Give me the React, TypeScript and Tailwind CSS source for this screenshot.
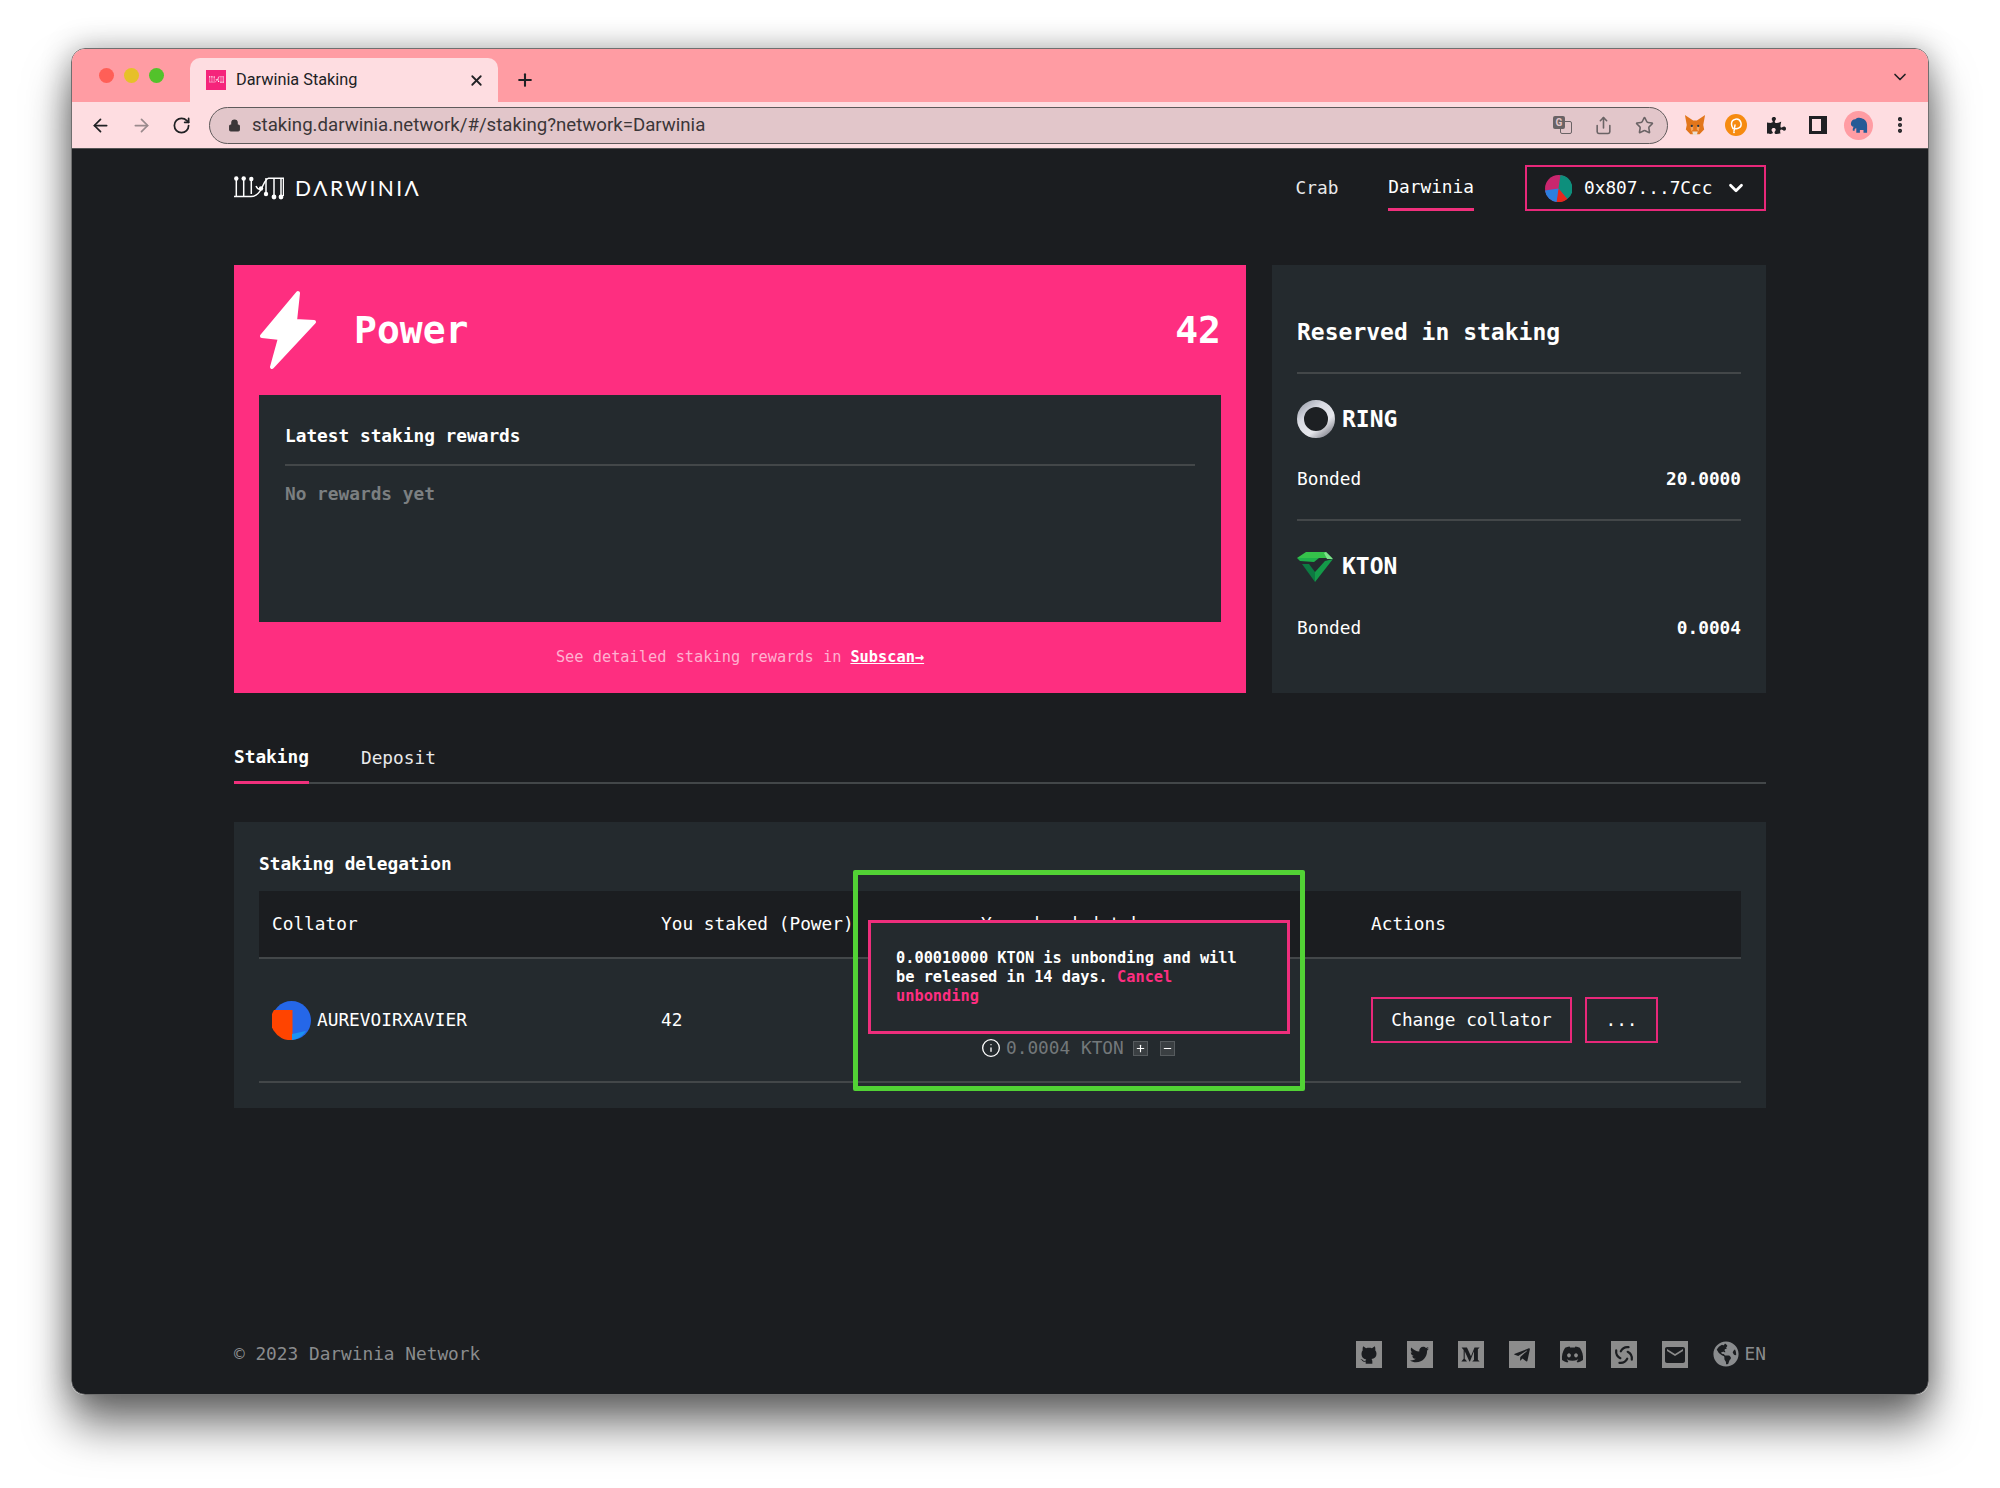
import { ArrowLeft, ArrowRight, ChevronDown, Info, Lock, Minus, MoreVertical, Plus, RotateCw, Share, Star, X } from "lucide-react";
import { FaDiscord, FaGlobeAmericas, FaMediumM, FaPuzzlePiece, FaTelegramPlane, FaTwitter } from "react-icons/fa";
import { MdEmail } from "react-icons/md";

const LogoMark = ({ className }: { className?: string }) => (
  <svg viewBox="0 0 50 24" className={className} fill="none" stroke="currentColor" strokeWidth="1.5">
    <path d="M2.300 3v17M9.700 3v17M17.300 3v15" />
    <path d="M0 20.500h17c5 0 8-3 10.500-8s4-9.800 7-10.300H50" />
    <path d="M32 2v16M40 2v19M47 2v19M49.500 2v18" />
    <path d="M22 10c1 2.500 3 3.500 5 3" />
    <circle cx="2.300" cy="2.500" r="2.200" fill="currentColor" stroke="none" />
    <circle cx="9.700" cy="2.500" r="2.200" fill="currentColor" stroke="none" />
    <circle cx="17.300" cy="3" r="2.200" fill="currentColor" stroke="none" />
    <circle cx="27" cy="12.500" r="2.200" fill="currentColor" stroke="none" />
    <circle cx="32" cy="18" r="2.200" fill="currentColor" stroke="none" />
    <circle cx="40" cy="21" r="2.400" fill="currentColor" stroke="none" />
    <circle cx="47" cy="21" r="2.400" fill="currentColor" stroke="none" />
  </svg>
);

const RingIcon = () => (
  <svg viewBox="0 0 38 38" className="w-[38px] h-[38px]">
    <defs>
      <linearGradient id="ringGrad" x1="0.1" y1="0" x2="0.9" y2="1">
        <stop offset="0" stopColor="#a9adb8" />
        <stop offset="0.3" stopColor="#d9dbe3" />
        <stop offset="0.7" stopColor="#e6e7ec" />
        <stop offset="1" stopColor="#8f9099" />
      </linearGradient>
    </defs>
    <circle cx="19" cy="19" r="15.500" fill="#1d2023" stroke="url(#ringGrad)" strokeWidth="7" />
  </svg>
);

const KtonIcon = () => (
  <svg viewBox="0 0 36 30" className="w-[36px] h-[30px]">
    <polygon points="9,0 29,0 35,6 0,6" fill="#35c24a" />
    <polygon points="29,0 36,7 30,7 27,1" fill="#7fe08a" />
    <polygon points="0,6 22,6 17,10 3,9" fill="#1fb04a" />
    <polygon points="5,12 12,12 18,20 18,30" fill="#0d7a42" />
    <polygon points="36,7 18,30 18,20 28,9" fill="#149a49" />
  </svg>
);

const FoxIcon = () => (
  <svg viewBox="0 0 24 24" className="w-[22px] h-[22px]">
    <polygon points="1,1 10,7 14,7 23,1 21,12 22,17 17,22 7,22 2,17 3,12" fill="#e2761b" />
    <polygon points="7,14 10,13 10,17 8,19" fill="#f6a35d" />
    <polygon points="17,14 14,13 14,17 16,19" fill="#f6a35d" />
    <polygon points="9,19 15,19 14,23 10,23" fill="#eadfd3" />
    <circle cx="8.500" cy="13" r="1.200" fill="#233447" />
    <circle cx="15.500" cy="13" r="1.200" fill="#233447" />
  </svg>
);

const PolkadotIcon = () => (
  <svg viewBox="0 0 22 22" className="w-[22px] h-[22px]">
    <circle cx="11" cy="11" r="11" fill="#f68b10" />
    <path d="M8 14.500c-1-1.500-1.500-3-1.500-4.500a4.800 4.800 0 1 1 7 4.200c-1 .5-2 .6-3 .5M9 17l1-6" fill="none" stroke="#fff" strokeWidth="1.500" strokeLinecap="round" />
    <circle cx="9" cy="18.300" r="0.900" fill="#fff" />
  </svg>
);

const ElephantAvatar = () => (
  <span className="w-[29px] h-[29px] rounded-full bg-[#ff9ca3] flex items-center justify-center">
    <svg viewBox="0 0 20 18" className="w-[18px] h-[17px]">
      <path d="M1 7c0-3 2-5 5-5 2-2 5-2 7-1 3 1 6 3 6 8v8h-4v-3h-4v3H7v-5c-2 0-2 2-2 3l-2-.500c0-2 .500-3 1-4C2 10 1 9 1 7Z" fill="#255a96" />
    </svg>
  </span>
);

const TranslateIcon = () => (
  <span className="relative w-[19px] h-[18px] block">
    <span className="absolute right-0 bottom-0 w-[12px] h-[13px] rounded-[2px] border border-[#6a6365] bg-[#e2c6ca]" />
    <span className="absolute left-0 top-0 w-[12px] h-[13px] rounded-[2px] bg-[#6a6365] text-[#e2c6ca] text-[10px] font-bold leading-[13px] text-center">G</span>
  </span>
);

const GithubIcon = () => (
  <svg viewBox="0 0 24 24" className="w-[20px] h-[21px]" fill="#1b1d20">
    <path d="M5 2l3.500 2.500c2.300-.7 4.700-.7 7 0L19 2c.6 1.500.8 3.500.5 5 1 1.200 1.500 2.500 1.500 4 0 4-2.500 6-6 6.500.6.600 1 1.500 1 2.500v3H8v-2.500c-2 .6-3.500.2-4.500-1.500-.4-.7-1-1.300-2-1.500 1.200-.3 2.300.2 3 1.200.8 1 2 1.200 3.500.8 0-.6.300-1.200.8-1.500C6 17.500 3 15.500 3 11c0-1.500.500-2.800 1.500-4C4.200 5.500 4.400 3.500 5 2z" />
  </svg>
);

const ElementIcon = () => (
  <svg viewBox="0 0 24 24" className="w-[22px] h-[22px]" fill="none" stroke="#1b1d20" strokeWidth="2.400" strokeLinecap="round">
    {[0, 90, 180, 270].map((deg) => (
      <path key={deg} d="M8.500 8c1.500-3 4.500-5 8.500-4.500" transform={`rotate(${deg} 12 12)`} />
    ))}
  </svg>
);

const AccountAvatar = () => (
  <svg viewBox="0 0 28 28" className="w-[27px] h-[27px]">
    <circle cx="14" cy="14" r="14" fill="#c9266e" />
    <path d="M14 14 L16 0 A14 14 0 0 1 23 25 Z" fill="#0d8f7c" />
    <path d="M14 14 L23 25 A14 14 0 0 1 12 28 Z" fill="#e5281c" />
    <path d="M14 14 L12 28 A14 14 0 0 1 0 16 Z" fill="#2b7fe0" />
  </svg>
);

const CollatorAvatar = () => (
  <svg viewBox="0 0 39 39" className="w-[39px] h-[39px]">
    <circle cx="19.500" cy="19.500" r="19.500" fill="#2567e8" />
    <path d="M2 9h18.500v30A19.500 19.500 0 0 1 2 9Z" fill="#ff4400" />
    <path d="M20 39V33l14-3A19.500 19.500 0 0 1 20 39Z" fill="#1c93f2" />
  </svg>
);

const Divider = () => <div className="h-[2px] bg-[#434749]" />;

const footerIcons = [
  <GithubIcon key="github" />,
  <FaTwitter key="twitter" className="text-[19px]" />,
  <FaMediumM key="medium" className="text-[19px]" />,
  <FaTelegramPlane key="telegram" className="text-[18px]" />,
  <FaDiscord key="discord" className="text-[23px]" />,
  <ElementIcon key="element" />,
  <MdEmail key="mail" className="text-[24px]" />,
];

export default function App() {
  return (
    <div className="w-[2000px] h-[1488px] bg-white pt-[48px] pl-[71px] overflow-hidden">
      <div className="w-[1858px] h-[1347px] rounded-[14px] border border-[#6f6f6f] overflow-hidden flex flex-col shadow-[0_30px_45px_rgba(0,0,0,0.55),0_0_30px_rgba(0,0,0,0.3)] font-['Roboto',sans-serif]">
        {/* browser tab strip */}
        <div className="h-[53px] shrink-0 bg-[#ff9ca3] flex items-end">
          <div className="w-[118px] h-full flex items-center gap-[10px] pl-[27px] pb-[1px] shrink-0">
            <span className="w-[15px] h-[15px] rounded-full bg-[#ff5f57]" />
            <span className="w-[15px] h-[15px] rounded-full bg-[#e6c029]" />
            <span className="w-[15px] h-[15px] rounded-full bg-[#53c22b]" />
          </div>
          <div className="w-[308px] h-[44px] bg-[#fedde1] rounded-t-[10px] flex items-center pl-[16px] pr-[13px] text-[#202124] text-[16.300px]">
            <span className="w-[20px] h-[20px] bg-[#f5247b] flex items-center justify-center text-white">
              <LogoMark className="w-[15px]" />
            </span>
            <span className="ml-[10px] flex-1 pt-[1px]">Darwinia Staking</span>
            <X size={17} strokeWidth={2.5} />
          </div>
          <div className="h-[44px] flex items-center pl-[17px] text-[#202124]">
            <Plus size={20} strokeWidth={2.5} />
          </div>
          <div className="flex-1 h-full flex items-center justify-end pr-[18px] pt-[2px] text-[#202124]">
            <ChevronDown size={20} strokeWidth={2} />
          </div>
        </div>

        {/* browser toolbar */}
        <div className="h-[47px] shrink-0 bg-[#fedde1] flex items-center border-b border-[#555]">
          <div className="w-[137px] flex items-center gap-[20px] pl-[18px] shrink-0 text-[#202124]">
            <ArrowLeft size={21} />
            <ArrowRight size={21} className="text-[#9a8a8d]" />
            <RotateCw size={19} strokeWidth={2.2} />
          </div>
          <div className="w-[1459px] h-[37px] rounded-full bg-[#e2c6ca] border border-[#5f5a5b] flex items-center pl-[18px] pr-[13px] text-[#3b3638] text-[18.650px]">
            <Lock size={13} fill="#3b3638" className="mr-[11px]" />
            <span className="flex-1 pt-[1px]">staking.darwinia.network/#/staking?network=Darwinia</span>
            <div className="flex items-center gap-[22px] text-[#6a6365]">
              <TranslateIcon />
              <Share size={19} />
              <Star size={19} />
            </div>
          </div>
          <div className="flex-1 flex items-center pl-[6px] text-[#202124]">
            <span className="w-[41px] flex justify-center"><FoxIcon /></span>
            <span className="w-[41px] flex justify-center"><PolkadotIcon /></span>
            <span className="w-[41px] flex justify-center"><FaPuzzlePiece className="text-[19px]" /></span>
            <span className="w-[41px] flex justify-center">
              <span className="w-[18px] h-[18px] border-[3px] border-r-[6px] border-[#202124] bg-[#fedde1]" />
            </span>
            <span className="w-[41px] flex justify-center"><ElephantAvatar /></span>
            <span className="w-[41px] flex justify-center"><MoreVertical size={20} strokeWidth={3} /></span>
          </div>
        </div>

        {/* page */}
        <div className="flex-1 bg-[#1b1d20] px-[162px] flex flex-col text-white text-[17.800px] font-['DejaVu_Sans_Mono',monospace]">
          <header className="h-[78px] shrink-0 flex items-center justify-between">
            <div className="flex items-center gap-[11px]">
              <LogoMark className="w-[50px] h-[24px] text-white" />
              <span className="font-['Lato',sans-serif] text-[21px] tracking-[2.400px]">DΛRWINIΛ</span>
            </div>
            <div className="flex items-center">
              <span className="h-[45px] flex items-center mr-[50px] text-[#e9e9ea]">Crab</span>
              <span className="h-[45px] flex items-center mr-[51px] border-b-[3px] border-[#f0307c] pt-[1px]">Darwinia</span>
              <button className="w-[241px] h-[46px] border-2 border-[#e8287a] flex items-center pl-[18px]">
                <AccountAvatar />
                <span className="ml-[12px]">0x807...7Ccc</span>
                <ChevronDown size={22} strokeWidth={3} className="ml-[13px]" />
              </button>
            </div>
          </header>

          <div className="mt-[38px] flex gap-[26px] h-[428px] shrink-0">
            {/* power card */}
            <div className="w-[1012px] bg-[#fe2e80] px-[25px] flex flex-col">
              <div className="h-[130px] shrink-0 flex items-center justify-between">
                <div className="flex items-center">
                  <svg viewBox="0 0 57 80" className="w-[57px] h-[80px]" fill="#fff" stroke="#fff" strokeWidth="4" strokeLinejoin="round">
                    <polygon points="39,3 36,31 55,32 13,77 21,48 3,46" />
                  </svg>
                  <span className="ml-[38px] text-[38px] font-semibold">Power</span>
                </div>
                <span className="text-[38px] font-semibold">42</span>
              </div>
              <div className="h-[227px] shrink-0 bg-[#242a2e] px-[26px]">
                <div className="h-[69px] flex items-center pt-[13px] font-bold">Latest staking rewards</div>
                <Divider />
                <div className="pt-[15px] font-bold text-[#7b7f81]">No rewards yet</div>
              </div>
              <div className="flex-1 flex items-center justify-center text-[15.300px] text-[#ffb1d0]">
                <span>See detailed staking rewards in </span>
                <span className="ml-[9px] text-white font-bold underline">Subscan→</span>
              </div>
            </div>

            {/* reserved card */}
            <div className="flex-1 bg-[#242a2e] px-[25px]">
              <div className="h-[107px] flex items-center pt-[28px] text-[23px] font-bold">Reserved in staking</div>
              <Divider />
              <div className="h-[90px] flex items-center gap-[7px] text-[23px] font-semibold">
                <RingIcon />
                RING
              </div>
              <div className="h-[30px] flex items-center justify-between">
                <span>Bonded</span>
                <span className="font-semibold">20.0000</span>
              </div>
              <div className="h-[25px]" />
              <Divider />
              <div className="h-[91px] flex items-center gap-[9px] text-[23px] font-semibold">
                <KtonIcon />
                KTON
              </div>
              <div className="h-[32px] flex items-center justify-between">
                <span>Bonded</span>
                <span className="font-semibold">0.0004</span>
              </div>
            </div>
          </div>

          {/* tabs */}
          <div className="mt-[43px] h-[48px] shrink-0 flex gap-[52px] border-b-2 border-[#434749]">
            <div className="h-[48px] flex items-center border-b-[3px] border-[#f0307c] font-bold pb-[2px]">Staking</div>
            <div className="h-[46px] flex items-center text-[#e9e9ea] pb-[2px]">Deposit</div>
          </div>

          {/* delegation table */}
          <div className="relative mt-[38px] h-[286px] shrink-0 bg-[#242a2e] px-[25px]">
            <div className="h-[69px] flex items-center pt-[15px] font-bold">Staking delegation</div>
            <div className="h-[68px] bg-[#1b1d20] border-b-2 border-[#434749] grid grid-cols-[389px_320px_390px_1fr] items-center pl-[13px]">
              <span>Collator</span>
              <span>You staked (Power)</span>
              <span>Your bonded tokens</span>
              <span>Actions</span>
            </div>
            <div className="h-[124px] border-b-2 border-[#434749] grid grid-cols-[389px_320px_390px_1fr] items-center pl-[13px]">
              <div className="flex items-center gap-[6px]">
                <CollatorAvatar />
                <span>AUREVOIRXAVIER</span>
              </div>
              <span>42</span>
              <div className="flex items-center pt-[56px] text-[#73787a]">
                <Info size={20} className="text-white mr-[5px]" strokeWidth={1.6} />
                <span>0.0004 KTON</span>
                <span className="ml-[9px] w-[15px] h-[15px] bg-[#3a3f42] border border-[#565b5e] flex items-center justify-center text-white">
                  <Plus size={11} strokeWidth={2.5} />
                </span>
                <span className="ml-[12px] w-[15px] h-[15px] bg-[#3a3f42] border border-[#565b5e] flex items-center justify-center text-white">
                  <Minus size={11} strokeWidth={2.5} />
                </span>
              </div>
              <div className="flex gap-[13px]">
                <button className="w-[201px] h-[46px] border-2 border-[#e8287a]">Change collator</button>
                <button className="w-[73px] h-[46px] border-2 border-[#e8287a]">...</button>
              </div>
            </div>

            {/* highlight box with the unbonding tooltip */}
            <div className="absolute left-[619px] top-[48px] w-[452px] h-[221px] border-[5px] border-[#52d235] rounded-[2px]">
              <div className="absolute left-[10px] top-[45px] w-[422px] h-[114px] border-[3px] border-[#ee2e7c] bg-[#242a2e] pl-[25px] pr-[40px] pt-[26px] text-[15.300px] leading-[19px] font-bold">
                0.00010000 KTON is unbonding and will be released in 14 days. <span className="text-[#fe2e80]">Cancel unbonding</span>
              </div>
            </div>
          </div>

          {/* footer */}
          <footer className="mt-auto h-[78px] shrink-0 flex justify-between pt-[25px] text-[#8a8c8e]">
            <span>© 2023 Darwinia Network</span>
            <div className="flex items-start gap-[25px] h-[27px]">
              {footerIcons.map((icon, i) => (
                <span key={i} className="w-[26px] h-[27px] bg-[#8c8c8c] text-[#1b1d20] flex items-center justify-center">
                  {icon}
                </span>
              ))}
              <span className="flex items-center gap-[6px]">
                <FaGlobeAmericas className="text-[26px]" />
                EN
              </span>
            </div>
          </footer>
        </div>
      </div>
    </div>
  );
}
